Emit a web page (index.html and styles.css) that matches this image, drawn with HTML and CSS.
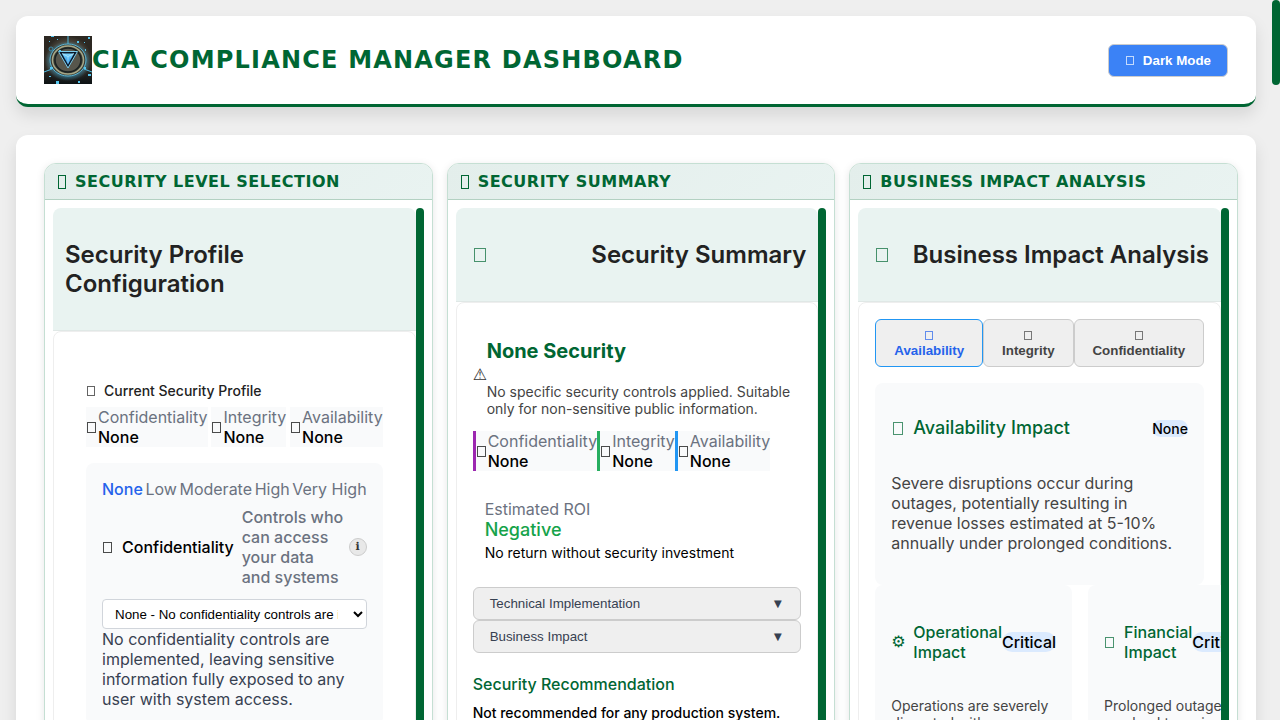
FILE: index.html
```html
<!DOCTYPE html>
<html lang="en">
<head>
<meta charset="utf-8">
<title>CIA Compliance Manager Dashboard</title>
<link rel="stylesheet" href="styles.css">
</head>
<body>
<div class="shell">
  <div class="page">
    <header class="topbar">
      <div class="brand">
        <svg class="logo" viewBox="0 0 48 48" aria-hidden="true">
          <defs>
            <radialGradient id="bg"><stop offset="0" stop-color="#7a7564"/><stop offset=".7" stop-color="#504b40"/><stop offset="1" stop-color="#2c2822"/></radialGradient>
            <linearGradient id="gem" x2="0" y2="1"><stop offset="0" stop-color="#7fd8ff"/><stop offset="1" stop-color="#1c86dc"/></linearGradient>
            <radialGradient id="glow"><stop offset=".6" stop-color="#3fb0dd" stop-opacity=".9"/><stop offset="1" stop-color="#2f9fd0" stop-opacity="0"/></radialGradient>
            <linearGradient id="floor" x2="0" y2="1"><stop offset="0" stop-color="#10181b" stop-opacity="0"/><stop offset="1" stop-color="#0c1214"/></linearGradient>
          </defs>
          <rect width="48" height="48" fill="url(#bg)"/>
          <rect y="32" width="48" height="16" fill="url(#floor)"/>
          <ellipse cx="24" cy="25" rx="23" ry="20" fill="url(#glow)" opacity=".8"/>
          <path d="M24 0v9M0 36l8-3M48 36l-8-3" stroke="#4fb9df"/>
          <ellipse cx="24" cy="24" rx="18" ry="16" fill="#3b3c35" stroke="#5ab4d2"/>
          <ellipse cx="24" cy="24" rx="15.500" ry="14" fill="none" stroke="#a5a888" stroke-width="1.500"/>
          <ellipse cx="24" cy="24" rx="13" ry="12" fill="#57564c" stroke="#1a2222" stroke-width="1.500"/>
          <path d="M14.500 15.500h19L24 32z" fill="#0b1a2c" stroke="#7ccdec"/>
          <path d="M18 17.500h12l-6 11z" fill="url(#gem)"/>
          <path d="M18 17.500l6 3 6-3M24 20.500v7" fill="none" stroke="#c8f1ff" stroke-width=".6"/>
          <g fill="#55c6ee"><path d="M7 0h3v1H7zM44 1h2v2h-2zM33 5h2v2h-2zM40 6h1v1h-1zM5 5h1v1H5zM13 3h1v1h-1zM44 38h3v2h-3zM12 45h3v3h-3zM34 45h2v2h-2zM5 40h2v1H5zM41 13h1v2h-1zM6 31h3v2H6zM40 31h2v2h-2zM15 14h2v2h-2z"/></g>
          <circle cx="7" cy="13" r="2" fill="none" stroke="#3a8aa8"/>
        </svg>
        <h1 class="brand-title">CIA Compliance Manager Dashboard</h1>
      </div>
      <button class="theme-button" type="button"><i class="glyph glyph-xs"></i>Dark Mode</button>
    </header>

    <main class="board">
      <section class="widget">
        <h2 class="widget-title"><i class="glyph glyph-tall"></i>Security Level Selection</h2>
        <div class="widget-body">
          <div class="scroll-area">
            <div class="section-head"><h3 class="section-title">Security Profile Configuration</h3></div>
            <div class="section-body">
              <div class="profile">
                <h4 class="profile-title"><i class="glyph glyph-sm"></i>Current Security Profile</h4>
                <div class="metrics metrics-spread">
                  <div class="metric"><i class="glyph"></i><div><div class="metric-label">Confidentiality</div><div class="metric-value">None</div></div></div>
                  <div class="metric"><i class="glyph"></i><div><div class="metric-label">Integrity</div><div class="metric-value">None</div></div></div>
                  <div class="metric"><i class="glyph"></i><div><div class="metric-label">Availability</div><div class="metric-value">None</div></div></div>
                </div>
                <div class="selector">
                  <div class="levels"><span class="level-on">None</span><span>Low</span><span>Moderate</span><span>High</span><span>Very High</span></div>
                  <div class="selector-row">
                    <label class="selector-name" for="conf"><i class="glyph"></i>Confidentiality</label>
                    <span class="selector-hint">Controls who can access your data and systems</span>
                    <button class="info-button" type="button" aria-label="More about confidentiality">ℹ</button>
                  </div>
                  <select class="selector-input" id="conf"><option>None - No confidentiality controls are implemented</option><option>Low</option><option>Moderate</option><option>High</option><option>Very High</option></select>
                  <p class="selector-text">No confidentiality controls are implemented, leaving sensitive information fully exposed to any user with system access.</p>
                </div>
              </div>
            </div>
          </div>
          <div class="rail" aria-hidden="true"></div>
        </div>
      </section>

      <section class="widget">
        <h2 class="widget-title"><i class="glyph glyph-tall"></i>Security Summary</h2>
        <div class="widget-body">
          <div class="scroll-area">
            <div class="section-head"><i class="glyph glyph-lg"></i><h3 class="section-title">Security Summary</h3></div>
            <div class="section-body">
              <div class="verdict">
                <span class="symbol">⚠</span>
                <div>
                  <h4 class="verdict-title">None Security</h4>
                  <p class="verdict-text">No specific security controls applied. Suitable only for non-sensitive public information.</p>
                </div>
              </div>
              <div class="metrics">
                <div class="metric edge-purple"><i class="glyph"></i><div><div class="metric-label">Confidentiality</div><div class="metric-value">None</div></div></div>
                <div class="metric edge-green"><i class="glyph"></i><div><div class="metric-label">Integrity</div><div class="metric-value">None</div></div></div>
                <div class="metric edge-blue"><i class="glyph"></i><div><div class="metric-label">Availability</div><div class="metric-value">None</div></div></div>
              </div>
              <div class="roi">
                <div class="metric-label">Estimated ROI</div>
                <div class="roi-value">Negative</div>
                <div class="roi-note">No return without security investment</div>
              </div>
              <button class="expander" type="button"><span>Technical Implementation</span><span>▼</span></button>
              <button class="expander" type="button"><span>Business Impact</span><span>▼</span></button>
              <h4 class="advice-title">Security Recommendation</h4>
              <p class="advice-text">Not recommended for any production system.</p>
            </div>
          </div>
          <div class="rail" aria-hidden="true"></div>
        </div>
      </section>

      <section class="widget">
        <h2 class="widget-title"><i class="glyph glyph-tall"></i>Business Impact Analysis</h2>
        <div class="widget-body">
          <div class="scroll-area">
            <div class="section-head"><i class="glyph glyph-lg"></i><h3 class="section-title">Business Impact Analysis</h3></div>
            <div class="section-body">
              <div class="tabs">
                <button class="tab tab-on" type="button"><i class="glyph glyph-xs"></i><span>Availability</span></button>
                <button class="tab" type="button"><i class="glyph glyph-xs"></i><span>Integrity</span></button>
                <button class="tab" type="button"><i class="glyph glyph-xs"></i><span>Confidentiality</span></button>
              </div>
              <div class="impact">
                <div class="impact-head">
                  <h4 class="impact-title"><i class="glyph glyph-md"></i>Availability Impact</h4>
                  <span class="badge badge-small">None</span>
                </div>
                <p class="impact-text">Severe disruptions occur during outages, potentially resulting in revenue losses estimated at 5-10% annually under prolonged conditions.</p>
              </div>
              <div class="impact-grid">
                <div class="impact">
                  <div class="impact-head"><h5 class="impact-subtitle"><span class="symbol">⚙</span><span>Operational Impact</span></h5><span class="badge">Critical</span></div>
                  <p class="impact-note">Operations are severely disrupted with widespread outages.</p>
                </div>
                <div class="impact">
                  <div class="impact-head"><h5 class="impact-subtitle"><i class="glyph"></i><span>Financial Impact</span></h5><span class="badge">Critical</span></div>
                  <p class="impact-note">Prolonged outages can lead to major revenue losses.</p>
                </div>
              </div>
            </div>
          </div>
          <div class="rail" aria-hidden="true"></div>
        </div>
      </section>
    </main>
  </div>
  <div class="page-rail" aria-hidden="true"><div class="page-thumb"></div></div>
</div>
</body>
</html>
```
FILE: styles.css
```css
* { box-sizing: border-box; }
body { margin: 0; background: #efefef; color: #000; font: 16px/20px Inter, sans-serif; }
h1, h2, h3, h4, h5, p { margin: 0; }
button, select { font-family: "Liberation Sans", Arial, sans-serif; }

/* Placeholder icon boxes */
.glyph { flex: none; width: 9px; height: 11px; margin: 0 2px 0 1px; border: 1px solid currentColor; opacity: .7; }
.glyph-xs { width: 8px; height: 9px; margin: 0 1px; }
.glyph-sm { width: 8px; height: 10px; margin: 0 1px; }
.glyph-md { width: 10px; height: 13px; margin: 0 2px; color: #006633; }
.glyph-tall { width: 8px; height: 14px; margin: 0 1px; opacity: 1; }
.glyph-lg { width: 12px; height: 14px; margin: 0 6px; color: #006633; }
.symbol { width: 14px; flex: none; font-family: "DejaVu Sans", sans-serif; }

.shell { display: flex; height: 100vh; overflow: hidden; }
.page { flex: 1; min-width: 0; padding: 16px; display: flex; flex-direction: column; gap: 28px; }
.page-rail { width: 8px; }
.page-thumb { height: 85px; border-radius: 4px; background: #006633; }

.topbar { display: flex; align-items: center; justify-content: space-between; padding: 20px 28px; background: #fff; border-bottom: 3px solid #006633; border-radius: 12px; box-shadow: 0 8px 16px rgba(0, 0, 0, .1); }
.brand { display: flex; align-items: center; }
.logo { width: 48px; height: 48px; }
.brand-title { font: bold 24px/28px "DejaVu Sans", sans-serif; letter-spacing: 1.2px; text-transform: uppercase; color: #006633; }
.theme-button { display: flex; align-items: center; gap: 8px; padding: 8px 16px; border: 1px solid #ccc; border-radius: 6px; background: #3b82f6; color: #fff; font-weight: bold; line-height: 15px; }

.board { display: grid; grid-template-columns: repeat(3, minmax(0, 1fr)); gap: 14px; padding: 28px 18px 28px 28px; background: #fff; border-radius: 12px; box-shadow: 0 8px 16px rgba(0, 0, 0, .1); }
.widget { display: flex; flex-direction: column; min-width: 0; background: #fff; border: 1px solid #c5dfd3; border-radius: 12px; box-shadow: 0 2px 8px rgba(0, 0, 0, .1); overflow: hidden; }
.widget-title { display: flex; align-items: center; gap: 8px; padding: 8px 12px; border-bottom: 1px solid #b3d1c2; background: linear-gradient(135deg, #e3eeeb, #e9f3f1); color: #006633; font: bold 16px/19px "DejaVu Sans", sans-serif; letter-spacing: .5px; text-transform: uppercase; }
.widget-body { flex: 1; display: flex; padding: 8px; }
.scroll-area { flex: 1; min-width: 0; overflow: hidden; }
.rail { width: 8px; border-radius: 4px; background: #006633; }

.section-head { display: flex; align-items: center; justify-content: space-between; padding: 32px 12px; border-bottom: 1px solid #e0e8e6; border-radius: 8px 8px 0 0; background: #e9f3f1; }
.section-title { color: #222; font-size: 24px; font-weight: 600; line-height: 29px; }
.section-body { padding: 16px; border: 1px solid #eee; border-radius: 8px; background: #fff; }

.profile { padding: 16px; }
.profile-title { display: flex; align-items: center; gap: 8px; margin: 18px 0 8px; color: #222; font-size: 14px; font-weight: 500; line-height: 17px; }
.metrics { display: flex; }
.metrics-spread { justify-content: space-between; }
.metric { display: flex; align-items: center; background: #f9fafb; }
.metric-label { color: #6b7280; }
.metric-value { font-weight: 500; }
.edge-purple { border-left: 3px solid #9c27b0; }
.edge-green { border-left: 3px solid #27ae60; }
.edge-blue { border-left: 3px solid #2196f3; }

.selector { margin-top: 16px; padding: 16px; border-radius: 8px; background: #f9fafb; }
.levels { display: flex; justify-content: space-between; color: #6b7280; white-space: nowrap; }
.level-on { color: #2563eb; font-weight: 500; }
.selector-row { display: flex; align-items: center; margin: 8px 0 12px; font-weight: 500; }
.selector-name { display: flex; align-items: center; gap: 8px; }
.selector-hint { flex: 1; margin: 0 2px 0 8px; color: #6b7280; }
.info-button { width: 18px; height: 18px; flex: none; padding: 0; border: 1px solid #ccc; border-radius: 50%; background: #e8e8e8; color: #333; font: bold 11px/16px "DejaVu Sans", sans-serif; }
.selector-input { display: block; width: 100%; height: 30px; padding: 0 12px 0 8px; border: 1px solid #d1d5db; border-radius: 4px; background: #fff; color: #000; }
.selector-text { color: #374151; }

.verdict { display: flex; align-items: center; color: #333; }
.verdict-title { margin: 20px 0; color: #006633; font-size: 20px; font-weight: 700; line-height: 24px; }
.verdict-text { margin-bottom: 14px; color: #444; font-size: 14px; line-height: 17px; }
.roi { margin: 16px 0 14px; padding: 12px; }
.roi-value { color: #16a34a; font-size: 18px; font-weight: 500; line-height: 22px; }
.roi-note { margin-top: 3px; font-size: 14px; line-height: 17px; }
.expander { display: flex; justify-content: space-between; width: 100%; padding: 8px 16px; border: 1px solid #ccc; border-radius: 6px; background: #efefef; color: #374151; line-height: 15px; }
.advice-title { margin-top: 21px; color: #006633; font-size: 16px; font-weight: 500; }
.advice-text { margin-top: 10px; font-size: 14px; font-weight: 500; line-height: 17px; }

.tabs { display: flex; margin-bottom: 16px; }
.tab { flex: 1 1 auto; display: flex; flex-direction: column; align-items: center; gap: 3px; padding: 11px 16px 8px; border: 1px solid #ccc; border-radius: 6px; background: #efefef; color: #444; font-weight: bold; line-height: 15px; }
.tab-on { border-color: #2196f3; color: #2563eb; }
.impact { padding: 16px; border-radius: 8px; background: #f9fafb; }
.impact-head { display: flex; align-items: center; justify-content: space-between; }
.impact-title { display: flex; align-items: center; gap: 8px; margin: 18px 0; color: #006633; font-size: 18px; font-weight: 500; line-height: 22px; }
.impact-subtitle { display: flex; align-items: center; gap: 8px; margin: 21px 0; color: #006633; font-size: 16px; font-weight: 500; }
.impact-text { margin: 16px 0; color: #444; }
.impact-note { margin: 14px 0; color: #444; font-size: 14px; line-height: 17px; }
.impact-grid { display: grid; grid-template-columns: 1fr 1fr; gap: 16px; }
.badge { border-radius: 10px; background: #dbeafe; font-weight: 500; }
.badge-small { font-size: 14px; line-height: 17px; }
```
